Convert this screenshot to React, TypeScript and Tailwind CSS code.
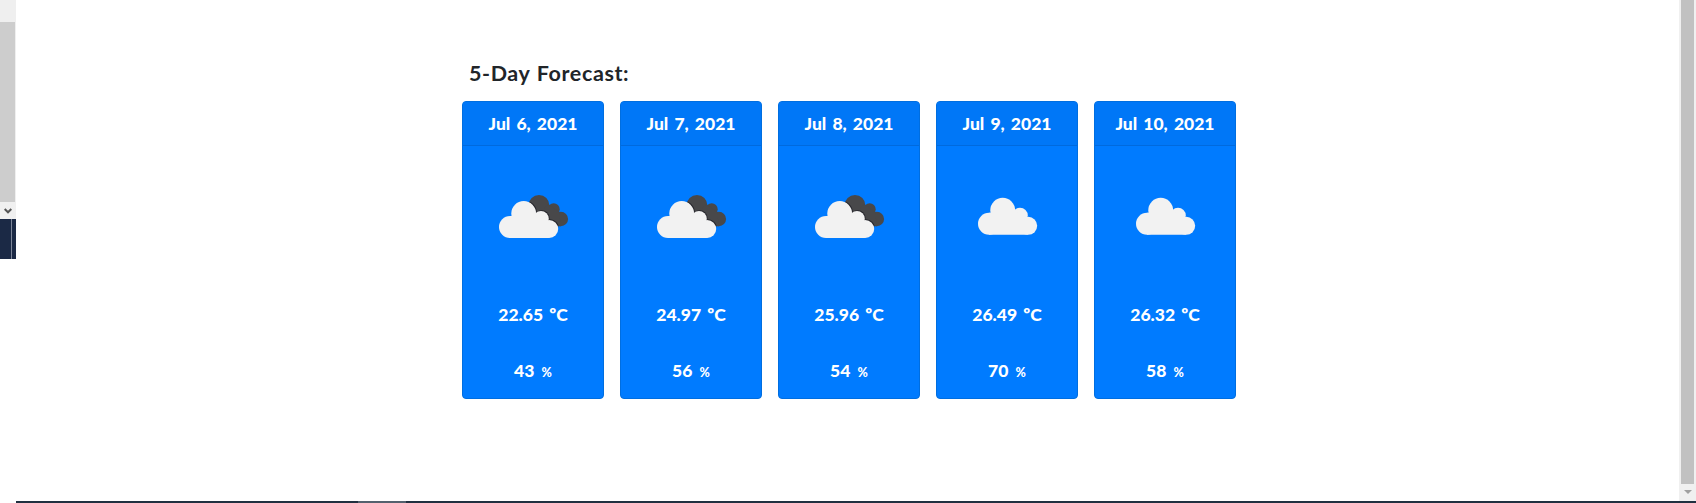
type Day = { date: string; temp: string; humidity: number; sky: 'broken' | 'cloudy' };

const days: Day[] = [
  { date: 'Jul 6, 2021', temp: '22.65', humidity: 43, sky: 'broken' },
  { date: 'Jul 7, 2021', temp: '24.97', humidity: 56, sky: 'broken' },
  { date: 'Jul 8, 2021', temp: '25.96', humidity: 54, sky: 'broken' },
  { date: 'Jul 9, 2021', temp: '26.49', humidity: 70, sky: 'cloudy' },
  { date: 'Jul 10, 2021', temp: '26.32', humidity: 58, sky: 'cloudy' },
];

function Cloud() {
  return (
    <>
      <circle cx="27" cy="60" r="11" />
      <circle cx="40.7" cy="46.4" r="12.4" />
      <circle cx="58" cy="51.7" r="7.8" />
      <circle cx="66.2" cy="62" r="9" />
      <path d="M27 49h2L53 46l10 10 3 15H27z" />
    </>
  );
}

function BackCloud() {
  return (
    <>
      <circle cx="56" cy="38.4" r="10.4" />
      <circle cx="70.7" cy="42.2" r="6" />
      <circle cx="77.9" cy="52" r="7.2" />
      <path d="M56 48L65 37l11 8 2 14.2h-8L58 54z" />
    </>
  );
}

function SkyIcon({ sky }: { sky: Day['sky'] }) {
  return (
    <svg viewBox="0 0 100 100" className="size-[100px] shrink-0">
      {sky === 'broken' ? (
        <>
          <clipPath id="back-cloud"><BackCloud /></clipPath>
          <g fill="#48484a"><BackCloud /></g>
          <g clipPath="url(#back-cloud)">
            <g fill="#25252b" transform="translate(.8 -.7)"><Cloud /></g>
          </g>
          <g fill="#f2f2f2"><Cloud /></g>
        </>
      ) : (
        <g fill="#f2f2f2" transform="translate(5 -3.2)"><Cloud /></g>
      )}
    </svg>
  );
}

function DayCard({ day }: { day: Day }) {
  return (
    <article className="flex h-[298px] w-[142px] flex-col items-center rounded border border-[#006ee0] bg-[#007bff] text-[17.5px] leading-6 font-black text-white">
      <header className="flex h-[44px] w-full shrink-0 items-center justify-center rounded-t-[3px] border-b border-[#006ade] bg-[#0077f7] whitespace-pre">
        {day.date}
      </header>
      <div className="flex w-full flex-col items-center pt-[21px]">
        <SkyIcon sky={day.sky} />
        <p className="mt-9 whitespace-pre">{day.temp} ºC</p>
        <p className="mt-8 whitespace-pre">{day.humidity} <span className="ml-px text-[12.5px]">%</span></p>
      </div>
    </article>
  );
}

export default function App() {
  return (
    <div className="flex h-[503px] w-full overflow-hidden bg-white font-['Lato',sans-serif]">
      <aside className="flex w-4 shrink-0 flex-col">
        <div className="h-[22px] bg-[#efefef]" />
        <div className="h-[180px] border-r border-[#efefef] bg-[#cdcdcd]" />
        <div className="flex h-[17px] items-center justify-center bg-[#f0f0f0]">
          <svg viewBox="0 0 8 6" className="h-1.5 w-2"><path d="M.7 1L4 4.3 7.3 1" fill="none" stroke="#555" strokeWidth="2" /></svg>
        </div>
        <div className="flex h-10 bg-[#1b2945] pl-[11px]">
          <div className="w-px bg-[#7d8699]" />
        </div>
      </aside>
      <div className="flex min-w-0 flex-1 flex-col">
        <div className="flex min-h-0 flex-1">
          <main className="flex-1 pt-[59px] pl-[446px]">
            <h1 className="pl-[7px] text-[21.5px] leading-7 font-bold tracking-[0.6px] text-[#212529] [word-spacing:1px]">5-Day Forecast:</h1>
            <div className="mt-[14px] flex gap-4 [word-spacing:2px]">
              {days.map((day) => <DayCard key={day.date} day={day} />)}
            </div>
          </main>
          <aside className="flex w-[17px] shrink-0 flex-col bg-[#f0f0f0]">
            <div className="ml-0.5 h-[484px] w-[13px] bg-[#c1c1c1]" />
            <svg viewBox="0 0 8 4" className="mt-1.5 ml-[5px] h-1 w-2"><path d="M0 0h8L4 4z" fill="#a0a0a0" /></svg>
          </aside>
        </div>
        <div className="flex h-0.5 shrink-0 bg-[#203040] pl-[342px]">
          <div className="w-12 bg-[#53616e]" />
        </div>
      </div>
    </div>
  );
}
